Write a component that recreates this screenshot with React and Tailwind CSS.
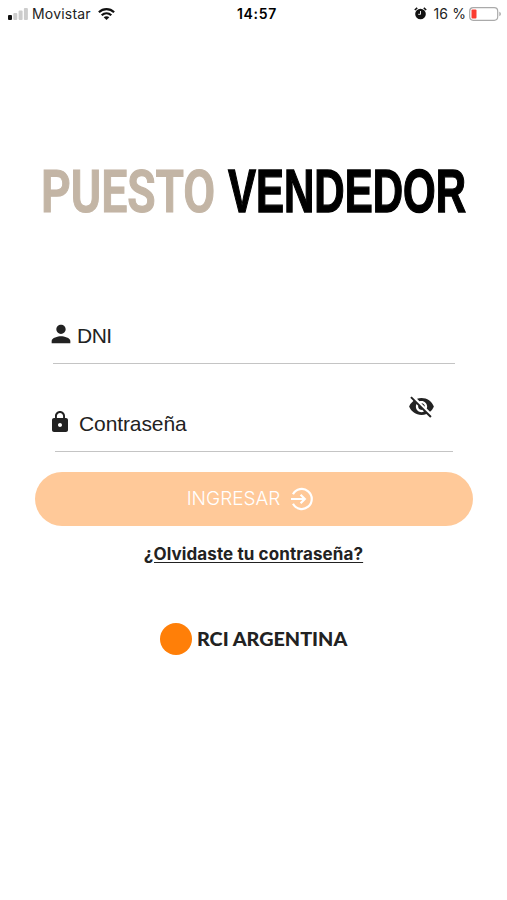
import { MdLock, MdPerson, MdVisibilityOff } from 'react-icons/md';

const StatusBar = () => (
    <header className="grid grid-cols-3 items-center h-[27px] pl-2 pr-[5px] text-[14px] text-[#222] font-['Inter',sans-serif]">
        <div className="flex items-center">
            <svg width="20" height="12" viewBox="0 0 20 12">
                <rect x="0" y="7" width="4" height="5" rx="1" fill="#111" />
                <rect x="5.3" y="5" width="4" height="7" rx="1" fill="#ccc" />
                <rect x="10.6" y="2.5" width="4" height="9.5" rx="1" fill="#ccc" />
                <rect x="15.9" y="0" width="4" height="12" rx="1" fill="#ccc" />
            </svg>
            <span className="ml-1 tracking-[0.2px]">Movistar</span>
            <svg className="ml-[7px]" width="17" height="12" viewBox="0 0 17 12" fill="none" stroke="#111" strokeWidth="2.2">
                <path d="M0.9 4.2C5.2 0.1 11.8 0.1 16.1 4.2" />
                <path d="M3.7 7.2C6.5 4.6 10.5 4.6 13.3 7.2" />
                <path d="M8.5 12L5.7 9.3C7.3 7.9 9.7 7.9 11.3 9.3Z" fill="#111" stroke="none" />
            </svg>
        </div>
        <span className="pl-1 text-center font-semibold text-black tracking-[0.7px]">14:57</span>
        <div className="flex items-center justify-end">
            <svg width="13" height="13" viewBox="0 0 13 13">
                <circle cx="6.5" cy="7" r="5.3" fill="#111" />
                <path d="M0.8 3L3.2 0.9M12.2 3L9.8 0.9" stroke="#111" strokeWidth="1.6" />
                <path d="M6.5 4V7.3H4.2" stroke="#fff" strokeWidth="0.9" fill="none" />
            </svg>
            <span className="ml-[7px] whitespace-nowrap tracking-[0.1px]">16 %</span>
            <svg className="ml-[3px]" width="33" height="14" viewBox="0 0 33 14">
                <rect x="0.7" y="0.7" width="28" height="12.6" rx="3.5" fill="#fff" stroke="#aaa" strokeWidth="1.2" />
                <rect x="2.5" y="2.5" width="5" height="9" rx="1" fill="#fb3b30" />
                <path d="M30.3 4.8C32.4 5.5 32.4 8.5 30.3 9.2Z" fill="#aaa" />
            </svg>
        </div>
    </header>
);

// Both words are squeezed horizontally to get the condensed logo lettering
const Wordmark = () => (
    <div className="flex items-baseline ml-[41px] h-20 leading-[80px]">
        <div className="w-[187px]">
            <span className="inline-block origin-left scale-x-[0.785] text-[59px] font-semibold text-[#c3b5a5] [-webkit-text-stroke:1.2px_#c3b5a5] font-['Roboto',sans-serif]">PUESTO</span>
        </div>
        <div className="w-[240px]">
            <span className="inline-block origin-left scale-x-[0.694] text-[60.5px] font-bold text-black [-webkit-text-stroke:1.4px_#000] font-['Liberation_Sans',sans-serif]">VENDEDOR</span>
        </div>
    </div>
);

const EnterIcon = () => (
    <svg width="24" height="24" viewBox="0 0 24 24" fill="none" stroke="#fff" strokeWidth="2.2">
        <path d="M3 7.2A10 10 0 1 1 3 16.8" />
        <path d="M1 12H14.5M10.6 7.8L14.8 12L10.6 16.2" />
    </svg>
);

const App = () => {
    return (
        <div className="w-full h-[900px] bg-white overflow-hidden font-['Liberation_Sans',sans-serif] text-[#222]">
            <StatusBar />

            <main className="pt-[124px]">
                <h1>
                    <Wordmark />
                </h1>

                <form className="mt-[82px]">
                    <div className="flex items-center h-[51px] ml-[53px] mr-[52px] pb-[6px] border-b border-[#c4c4c4]">
                        <MdPerson size={28} className="-ml-[6px] mb-[3px]" />
                        <label className="ml-[2px] text-[21px] leading-none tracking-[-0.5px]">DNI</label>
                    </div>

                    <div className="flex h-[88px] ml-[55px] mr-[54px] pb-[14px] border-b border-[#c4c4c4]">
                        <MdLock size={24} className="-ml-[7px] mt-[46px]" />
                        <label className="ml-[7px] mt-[49px] text-[21px] leading-none tracking-[-0.1px]">Contraseña</label>
                        <MdVisibilityOff size={27} className="ml-auto mr-[18px] mt-[29px]" />
                    </div>

                    <button type="button" className="flex items-center justify-center gap-[10px] h-[54px] w-[438px] ml-[35px] mt-[19.5px] pr-[7px] rounded-full bg-[#ffc999] text-white">
                        <span className="mt-px font-['Inter',sans-serif] font-light text-[19px]">INGRESAR</span>
                        <EnterIcon />
                    </button>
                </form>

                <p className="mt-4 text-center text-[17px] leading-6 tracking-[0.1px] font-bold font-['Inter',sans-serif]">
                    <a className="underline underline-offset-2">¿Olvidaste tu contraseña?</a>
                </p>

                <div className="flex items-center ml-[160px] mt-[57.5px]">
                    <span className="size-8 rounded-full bg-[#ff7f08]" />
                    <span className="ml-[5px] -mt-[2px] text-[19.8px] leading-8 font-black whitespace-nowrap font-['Lato',sans-serif]">RCI ARGENTINA</span>
                </div>
            </main>
        </div>
    );
};

export default App;
